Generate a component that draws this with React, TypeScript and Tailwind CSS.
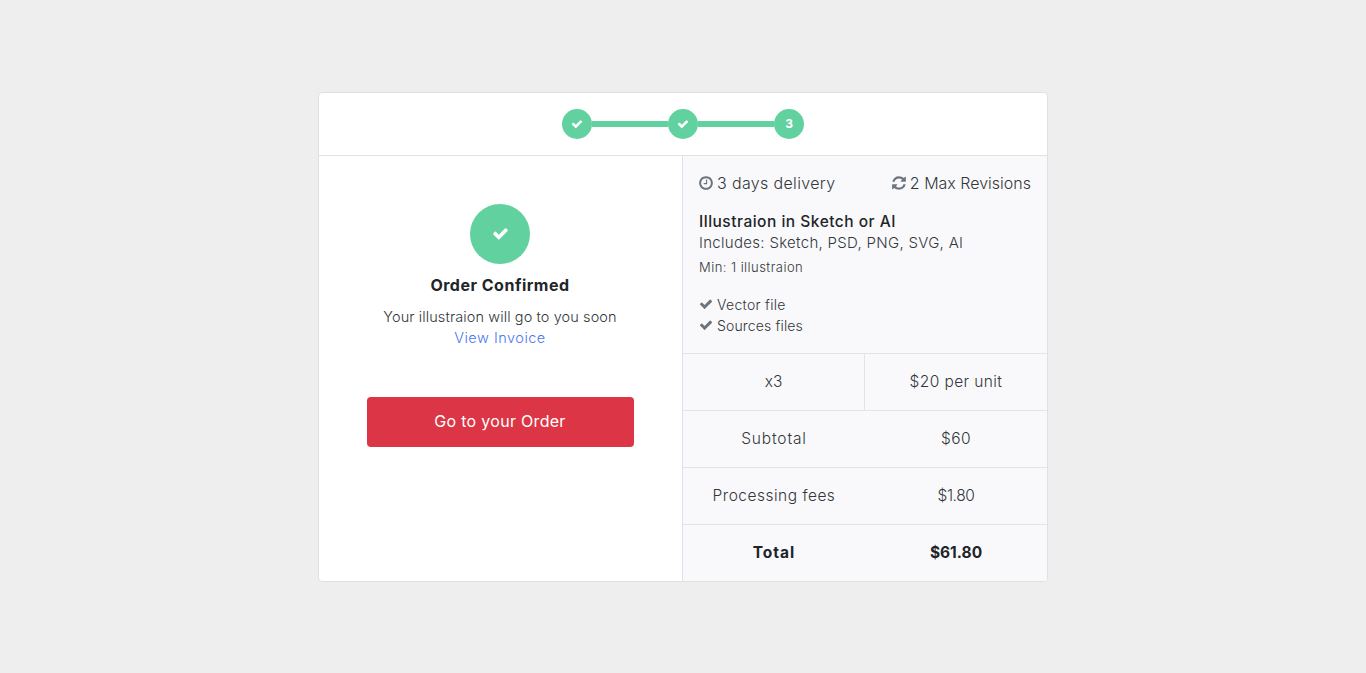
const Check = ({ className }: { className: string }) => (
  <svg viewBox="0 0 1792 1792" className={className} fill="currentColor">
    <path d="M1671 566q0 40-28 68l-724 724-136 136q-28 28-68 28t-68-28l-136-136-362-362q-28-28-28-68t28-68l136-136q28-28 68-28t68 28l294 295 656-657q28-28 68-28t68 28l136 136q28 28 28 68z" />
  </svg>
);
const Clock = ({ className }: { className: string }) => (
  <svg viewBox="0 0 1792 1792" className={className} fill="currentColor">
    <path d="M1024 544v448q0 14-9 23t-23 9h-320q-14 0-23-9t-9-23v-64q0-14 9-23t23-9h224v-352q0-14 9-23t23-9h64q14 0 23 9t9 23zm416 352q0-148-73-273t-198-198-273-73-273 73-198 198-73 273 73 273 198 198 273 73 273-73 198-198 73-273zm224 0q0 209-103 385.500t-279.500 279.500-385.500 103-385.500-103-279.500-279.500-103-385.500 103-385.500 279.500-279.500 385.500-103 385.500 103 279.500 279.500 103 385.500z" />
  </svg>
);
const Refresh = ({ className }: { className: string }) => (
  <svg viewBox="0 0 1792 1792" className={className} fill="currentColor">
    <path d="M1639 1056q0 5-1 7-64 268-268 434.500t-478 166.500q-146 0-282.500-55t-243.500-157l-129 129q-19 19-45 19t-45-19-19-45v-448q0-26 19-45t45-19h448q26 0 45 19t19 45-19 45l-137 137q71 66 161 102t187 36q134 0 250-65t186-179q11-17 53-117 8-23 30-23h192q13 0 22.500 9.500t9.500 22.500zm25-800v448q0 26-19 45t-45 19h-448q-26 0-45-19t-19-45 19-45l138-138q-148-137-349-137-134 0-250 65t-186 179q-11 17-53 117-8 23-30 23h-199q-13 0-22.500-9.500t-9.500-22.500v-7q65-268 270-434.500t480-166.500q146 0 284 55.500t245 156.500l130-129q19-19 45-19t45 19 19 45z" />
  </svg>
);

const Step = ({ children }: { children: React.ReactNode }) => (
  <div className="w-[30px] h-[30px] rounded-full bg-[#61d29f] text-white flex items-center justify-center text-[12px] font-bold shrink-0">
    {children}
  </div>
);
const Line = () => <div className="w-[76px] h-[6px] bg-[#61d29f]" />;

const Row = ({ a, b, at, bt, bold, divide }: { a: string; b: string; at?: string; bt?: string; bold?: boolean; divide?: boolean }) => (
  <div className={`grid grid-cols-2 h-[57px] border-t border-[#e2e4e8] text-[15.5px] ${bold ? "font-bold text-[#212529]" : "font-light text-[#33373c]"}`}>
    <div className={`flex items-center justify-center ${at ?? ""} ${divide ? "border-r border-[#e2e4e8]" : ""}`}>{a}</div>
    <div className={`flex items-center justify-center ${bt ?? ""}`}>{b}</div>
  </div>
);

export default function App() {
  return (
    <div className="min-h-screen bg-[#eeeeee] flex items-center justify-center font-['Inter',sans-serif]">
      <div className="w-[730px] bg-white border border-[#e0e0e0] rounded-[4px] flex flex-col overflow-hidden">
        <div className="h-[63px] border-b border-[#e0e2e6] flex items-center justify-center">
          <Step><Check className="w-[12px] h-[12px]" /></Step>
          <Line />
          <Step><Check className="w-[12px] h-[12px]" /></Step>
          <Line />
          <Step>3</Step>
        </div>
        <div className="flex h-[425px]">
          <div className="w-[363px] flex flex-col items-center pt-[48px] pr-[1px]">
            <div className="w-[60px] h-[60px] rounded-full bg-[#61d29f] text-white flex items-center justify-center">
              <Check className="w-[17px] h-[17px]" />
            </div>
            <div className="mt-[9px] text-[16px] leading-[24px] font-bold text-[#212529] tracking-[0.5px]">Order Confirmed</div>
            <div className="mt-[9px] text-[14.5px] leading-[22px] font-light text-[#33373c] tracking-[0.1px]">Your illustraion will go to you soon</div>
            <a className="-mt-[1px] text-[14.5px] leading-[22px] font-light text-[#4a77f0] tracking-[0.5px]">View Invoice</a>
            <button className="mt-[48px] w-[267px] h-[50px] pb-[1px] bg-[#dc3545] text-white rounded-[4px] text-[16px] font-normal tracking-[0.3px]">Go to your Order</button>
          </div>
          <div className="flex-1 bg-[#f9f9fb] border-l border-[#e0e2e6] flex flex-col">
            <div className="h-[197px] px-[16px] pt-[16px] text-[#33373c]">
              <div className="flex justify-between text-[16px] leading-[22px] font-light">
                <span className="flex items-center gap-[3px] -ml-[1px] tracking-[0.35px]"><Clock className="w-[16px] h-[16px] text-[#6c757d]" />3 days delivery</span>
                <span className="flex items-center gap-[3px]"><Refresh className="w-[16px] h-[16px] text-[#6c757d]" />2 Max Revisions</span>
              </div>
              <div className="mt-[17px] text-[15.5px] leading-[21px] font-medium text-[#212529] tracking-[0.5px]">Illustraion in Sketch or AI</div>
              <div className="text-[15px] leading-[21px] font-light tracking-[0.3px]">Includes: Sketch, PSD, PNG, SVG, AI</div>
              <div className="mt-[3px] text-[13px] leading-[22px] font-light tracking-[0.45px]">Min: 1 illustraion</div>
              <div className="mt-[16px] flex items-center gap-[4px] text-[14px] leading-[21px] font-light tracking-[0.3px]"><Check className="w-[14px] h-[14px] text-[#6c757d]" />Vector file</div>
              <div className="flex items-center gap-[4px] text-[14px] leading-[21px] font-light tracking-[0.15px]"><Check className="w-[14px] h-[14px] text-[#6c757d]" />Sources files</div>
            </div>
            <Row a="x3" b="$20 per unit" bt="tracking-[0.4px]" divide />
            <Row a="Subtotal" b="$60" at="tracking-[0.85px]" bt="tracking-[0.5px]" />
            <Row a="Processing fees" b="$1.80" at="tracking-[0.5px]" bt="tracking-[-0.4px]" />
            <Row a="Total" b="$61.80" at="tracking-[1px]" bold />
          </div>
        </div>
      </div>
    </div>
  );
}
